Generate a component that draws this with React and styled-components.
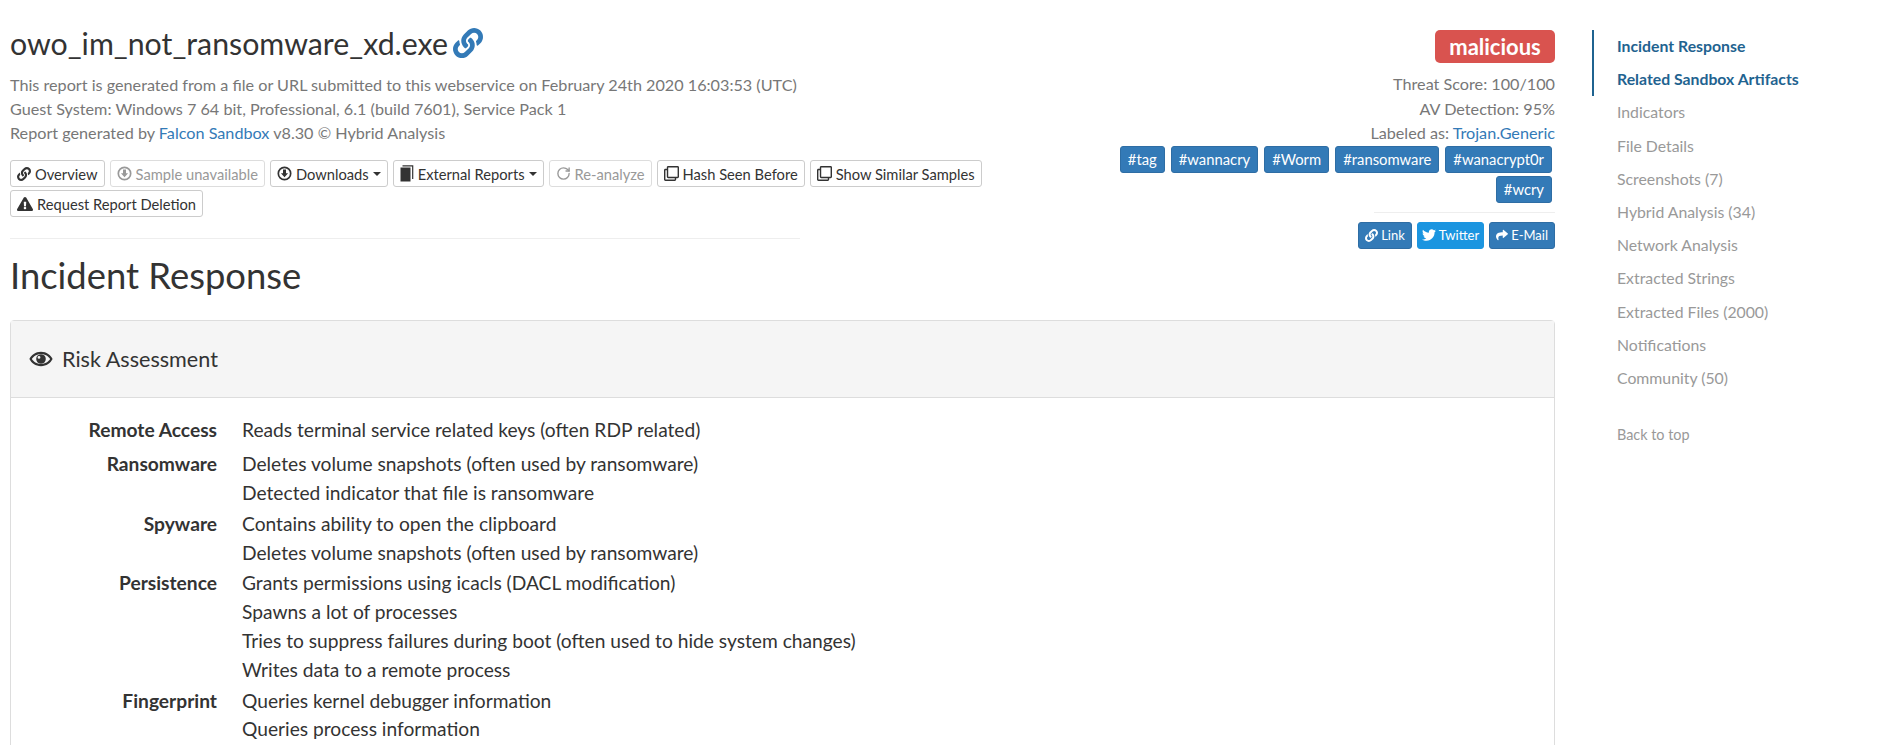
import React from "react";
import styled, { createGlobalStyle } from "styled-components";
import { FaLink, FaTwitter, FaShare, FaExclamationTriangle, FaRegClone } from "react-icons/fa";
import { RotateCw } from "lucide-react";

const Global = createGlobalStyle`
  html, body { margin: 0; padding: 0; background: #fff; height: 745px; overflow: hidden; }
  body { font-family: "Lato", "Open Sans", sans-serif; color: #333; font-size: 16px; }
  a { text-decoration: none; color: #337ab7; }
`;

const Page = styled.div`
  display: flex;
  align-items: flex-start;
  width: 1882px;
  height: 745px;
  overflow: hidden;
  padding: 0 0 0 10px;
  box-sizing: border-box;
`;
const Main = styled.main`
  width: 1545px;
  flex: none;
`;
const Header = styled.header`
  display: flex;
  justify-content: space-between;
  align-items: flex-start;
`;
const LeftCol = styled.div`
  width: 790px;
  padding-top: 24px;
`;
const Title = styled.h1`
  margin: 0;
  font-size: 30.3px;
  font-weight: 400;
  line-height: 38px;
  color: #333;
  display: flex;
  align-items: center;
  gap: 5px;
  white-space: nowrap;
`;
const Meta = styled.div`
  margin-top: 11px;
  font-size: 16.2px;
  line-height: 24px;
  color: #777;
  white-space: nowrap;
`;
const Buttons = styled.div`
  display: flex;
  flex-wrap: wrap;
  gap: 3px 5px;
  margin-top: 15px;
  width: 985px;
`;
const Btn = styled.span`
  display: inline-flex;
  align-items: center;
  gap: 4px;
  height: 27px;
  padding: 0 6px;
  box-sizing: border-box;
  border: 1px solid #ccc;
  border-radius: 3px;
  font-size: 14.7px;
  white-space: nowrap;
  color: ${p => (p.$off ? "#999" : "#333")};
  border-color: ${p => (p.$off ? "#ddd" : "#ccc")};
  svg { flex: none; }
`;
const Caret = styled.i`
  width: 0;
  height: 0;
  border-left: 4.5px solid transparent;
  border-right: 4.5px solid transparent;
  border-top: 4.5px solid currentColor;
`;
const Rule = styled.hr`
  margin: 21px 0 0;
  border: 0;
  border-top: 1px solid #eee;
  width: ${p => p.$w};
`;
const SideRule = styled(Rule)`
  margin-top: 9px;
`;
const RightCol = styled.div`
  width: 460px;
  padding-top: 30px;
  display: flex;
  flex-direction: column;
  align-items: flex-end;
`;
const Verdict = styled.span`
  width: 120px;
  height: 33px;
  display: flex;
  align-items: center;
  justify-content: center;
  background: #d9534f;
  color: #fff;
  font-weight: 700;
  font-size: 22px;
  border-radius: 5px;
`;
const Stats = styled.div`
  margin-top: 9px;
  text-align: right;
  line-height: 24.5px;
  font-size: 16.2px;
  color: #777;
`;
const Tags = styled.div`
  display: flex;
  flex-wrap: wrap;
  justify-content: flex-end;
  gap: 3px 6px;
  padding-right: 3px;
  width: 100%;
  box-sizing: border-box;
`;
const Tag = styled.span`
  height: 27px;
  padding: 0 7px;
  display: inline-flex;
  align-items: center;
  background: #337ab7;
  border: 1px solid #2e6da4;
  box-sizing: border-box;
  color: #fff;
  border-radius: 3px;
  font-size: 14.8px;
  white-space: nowrap;
`;
const ShareRow = styled.div`
  display: flex;
  gap: 5px;
  margin-top: 9px;
`;
const ShareBtn = styled.span`
  height: 27px;
  padding: 0 ${p => (p.$tw ? 4 : 6)}px;
  display: inline-flex;
  align-items: center;
  gap: 3px;
  box-sizing: border-box;
  background: ${p => (p.$tw ? "#1b95e0" : "#337ab7")};
  border: 1px solid ${p => (p.$tw ? "#1b95e0" : "#2e6da4")};
  color: #fff;
  border-radius: 3px;
  font-size: 13px;
`;
const Section = styled.h2`
  margin: 4px 0 0;
  font-size: 36.4px;
  line-height: 44px;
  font-weight: 400;
  color: #333;
`;
const Panel = styled.section`
  margin-top: 23px;
  border: 1px solid #ddd;
  border-radius: 4px;
  padding-bottom: 40px;
`;
const PanelHead = styled.div`
  height: 77px;
  background: #f5f5f5;
  border-bottom: 1px solid #ddd;
  box-sizing: border-box;
  display: flex;
  align-items: center;
  gap: 9px;
  padding: 0 18px;
  font-size: 21.6px;
  color: #333;
`;
const PanelBody = styled.div`
  padding: 18px 0 0;
  display: grid;
  grid-template-columns: 206px 1fr;
  column-gap: 25px;
  row-gap: 2px;
  > div:nth-child(2) { padding-bottom: 4px; }
`;
const Label = styled.div`
  text-align: right;
  font-weight: 700;
  font-size: 19.2px;
  line-height: 28.8px;
  color: #333;
`;
const Values = styled.div`
  font-size: 19.2px;
  line-height: 28.8px;
  color: #333;
`;
const Side = styled.nav`
  margin: 30px 0 0 37px;
  width: 260px;
`;
const SideLink = styled.a`
  display: block;
  height: 33.2px;
  line-height: 32px;
  padding-left: 23px;
  font-size: 15.8px;
  white-space: nowrap;
  color: ${p => (p.$active ? "#1f6390" : "#999")};
  font-weight: ${p => (p.$bold ? 700 : 400)};
  border-left: 2px solid ${p => (p.$active ? "#1f6390" : "transparent")};
`;
const BackTop = styled(SideLink)`
  margin-top: 24px;
  font-size: 14.4px;
`;

const CircleDown = ({ size = 15 }) => (
  <svg width={size} height={size} viewBox="0 0 16 16" aria-hidden="true">
    <circle cx="8" cy="8" r="6.6" fill="none" stroke="currentColor" strokeWidth="1.8" />
    <path d="M6.4 3.8h3.2v4h2.2L8 12 4.2 7.8h2.2z" fill="currentColor" />
  </svg>
);
const BookIcon = () => (
  <svg width="14" height="17" viewBox="0 0 14 17" aria-hidden="true">
    <path d="M0.5 2.5h10v14h-10z" fill="currentColor" />
    <path d="M2.5 0.8h10.2v13.2" fill="none" stroke="currentColor" strokeWidth="1.2" />
  </svg>
);
const EyeIcon = () => (
  <svg width="24" height="16" viewBox="0 0 24 16" aria-hidden="true">
    <path
      fillRule="evenodd"
      fill="currentColor"
      d="M12 .8C6.5.8 2.2 4.3.4 8c1.8 3.7 6.1 7.2 11.6 7.2S21.8 11.7 23.6 8C21.8 4.3 17.5.8 12 .8zm0 2.2c4.2 0 7.6 2.5 9.1 5-1.5 2.5-4.9 5-9.1 5S4.4 10.500 2.900 8C4.400 5.500 7.800 3 12 3z"
    />
    <path
      fillRule="evenodd"
      fill="currentColor"
      d="M12 3.200a4.800 4.800 0 1 0 0 9.600 4.800 4.800 0 0 0 0-9.600zM10 5a1.400 1.400 0 1 1 0 2.800A1.400 1.400 0 0 1 10 5z"
    />
  </svg>
);

const risks = [
  ["Remote Access", ["Reads terminal service related keys (often RDP related)"]],
  ["Ransomware", ["Deletes volume snapshots (often used by ransomware)", "Detected indicator that file is ransomware"]],
  ["Spyware", ["Contains ability to open the clipboard", "Deletes volume snapshots (often used by ransomware)"]],
  ["Persistence", ["Grants permissions using icacls (DACL modification)", "Spawns a lot of processes", "Tries to suppress failures during boot (often used to hide system changes)", "Writes data to a remote process"]],
  ["Fingerprint", ["Queries kernel debugger information", "Queries process information"]],
];
const tags = ["#tag", "#wannacry", "#Worm", "#ransomware", "#wanacrypt0r", "#wcry"];
const nav = ["Indicators", "File Details", "Screenshots (7)", "Hybrid Analysis (34)", "Network Analysis", "Extracted Strings", "Extracted Files (2000)", "Notifications", "Community (50)"];

export default function App() {
  return (
    <Page>
      <Global />
      <Main>
        <Header>
          <LeftCol>
            <Title>owo_im_not_ransomware_xd.exe <FaLink size={30} color="#337ab7" /></Title>
            <Meta>
              This report is generated from a file or URL submitted to this webservice on February 24th 2020 16:03:53 (UTC)<br />
              Guest System: Windows 7 64 bit, Professional, 6.1 (build 7601), Service Pack 1<br />
              Report generated by <a href="#f">Falcon Sandbox</a> v8.30 © Hybrid Analysis
            </Meta>
            <Buttons>
              <Btn><FaLink size={14} />Overview</Btn>
              <Btn $off><CircleDown />Sample unavailable</Btn>
              <Btn><CircleDown />Downloads<Caret /></Btn>
              <Btn><BookIcon />External Reports<Caret /></Btn>
              <Btn $off><RotateCw size={15} strokeWidth={2.2} />Re-analyze</Btn>
              <Btn><FaRegClone size={15} />Hash Seen Before</Btn>
              <Btn><FaRegClone size={15} />Show Similar Samples</Btn>
              <Btn><FaExclamationTriangle size={16} />Request Report Deletion</Btn>
            </Buttons>
            <Rule $w="790px" />
          </LeftCol>
          <RightCol>
            <Verdict>malicious</Verdict>
            <Stats>
              Threat Score: 100/100<br />
              AV Detection: 95%<br />
              Labeled as: <a href="#t">Trojan.Generic</a>
            </Stats>
            <Tags>{tags.map(t => <Tag key={t}>{t}</Tag>)}</Tags>
            <SideRule $w="181px" />
            <ShareRow>
              <ShareBtn><FaLink size={13} />Link</ShareBtn>
              <ShareBtn $tw><FaTwitter size={14} />Twitter</ShareBtn>
              <ShareBtn><FaShare size={12} />E-Mail</ShareBtn>
            </ShareRow>
          </RightCol>
        </Header>
        <Section>Incident Response</Section>
        <Panel>
          <PanelHead><EyeIcon />Risk Assessment</PanelHead>
          <PanelBody>
            {risks.map(([l, vs]) => (
              <React.Fragment key={l}>
                <Label>{l}</Label>
                <Values>{vs.map(v => <div key={v}>{v}</div>)}</Values>
              </React.Fragment>
            ))}
          </PanelBody>
        </Panel>
      </Main>
      <Side>
        <SideLink $active $bold href="#a">Incident Response</SideLink>
        <SideLink $active $bold href="#b">Related Sandbox Artifacts</SideLink>
        {nav.map(n => <SideLink key={n} href="#n">{n}</SideLink>)}
        <BackTop href="#top">Back to top</BackTop>
      </Side>
    </Page>
  );
}
